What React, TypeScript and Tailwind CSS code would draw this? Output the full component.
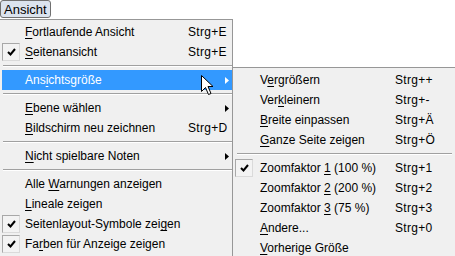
import React from "react";

type Item =
  | { sep: true }
  | {
      sep?: false;
      pre: string;
      key: string;
      post: string;
      shortcut?: string;
      checked?: boolean;
      arrow?: boolean;
      active?: boolean;
    };

const mainItems: Item[] = [
  { pre: "", key: "F", post: "ortlaufende Ansicht", shortcut: "Strg+E" },
  { pre: "", key: "S", post: "eitenansicht", shortcut: "Strg+E", checked: true },
  { sep: true },
  { pre: "Ans", key: "i", post: "chtsgröße", arrow: true, active: true },
  { sep: true },
  { pre: "", key: "E", post: "bene wählen", arrow: true },
  { pre: "", key: "B", post: "ildschirm neu zeichnen", shortcut: "Strg+D" },
  { sep: true },
  { pre: "", key: "N", post: "icht spielbare Noten", arrow: true },
  { sep: true },
  { pre: "Alle ", key: "W", post: "arnungen anzeigen" },
  { pre: "", key: "L", post: "ineale zeigen" },
  { pre: "Seitenlayout-Symbole zei", key: "g", post: "en", checked: true },
  { pre: "Fa", key: "r", post: "ben für Anzeige zeigen", checked: true },
];

const subItems: Item[] = [
  { pre: "V", key: "e", post: "rgrößern", shortcut: "Strg++" },
  { pre: "Ver", key: "k", post: "leinern", shortcut: "Strg+-" },
  { pre: "", key: "B", post: "reite einpassen", shortcut: "Strg+Ä" },
  { pre: "", key: "G", post: "anze Seite zeigen", shortcut: "Strg+Ö" },
  { sep: true },
  { pre: "Zoomfaktor ", key: "1", post: " (100 %)", shortcut: "Strg+1", checked: true },
  { pre: "Zoomfaktor ", key: "2", post: " (200 %)", shortcut: "Strg+2" },
  { pre: "Zoomfaktor ", key: "3", post: " (75 %)", shortcut: "Strg+3" },
  { pre: "", key: "A", post: "ndere...", shortcut: "Strg+0" },
  { pre: "", key: "V", post: "orherige Größe" },
];

const CheckBox = () => (
  <div className="w-[18px] h-[18px] border border-t-[#a8a8a8] border-l-[#a8a8a8] border-b-[#dadada] border-r-[#dadada] bg-[#f3f3f3] flex items-center justify-center">
    <svg width="9" height="8" viewBox="0 0 9 8">
      <path d="M1 4 L3.5 6.5 L8 1" stroke="#000" strokeWidth="2" fill="none" />
    </svg>
  </div>
);

const Arrow = ({ white }: { white?: boolean }) => (
  <svg width="4" height="7" viewBox="0 0 4 7">
    <path d="M0 0 L4 3.5 L0 7 Z" fill={white ? "#fff" : "#000"} />
  </svg>
);

const Label = ({ pre, k, post }: { pre: string; k: string; post: string }) => (
  <span className="whitespace-nowrap">
    {pre}
    <span className="underline underline-offset-2">{k}</span>
    {post}
  </span>
);

const Separator = ({ inset }: { inset: string }) => (
  <div className={`h-2 flex flex-col justify-center ${inset}`}>
    <div className="h-px bg-[#a0a0a0]" />
    <div className="h-px bg-white" />
  </div>
);

const MainMenu = () => (
  <div className="w-[233px] bg-[#f0f0f0] border-t border-r border-[#979797] pt-[2px] pb-1">
    {mainItems.map((it, i) =>
      it.sep ? (
        <Separator key={i} inset="ml-[3px]" />
      ) : (
        <div
          key={i}
          className={`h-5 grid grid-cols-[23px_163px_37px_9px] items-center ml-[2px] ${
            it.active ? "bg-[#3399ff] text-white" : ""
          }`}
        >
          <div className="flex items-center">{it.checked && <CheckBox />}</div>
          <Label pre={it.pre} k={it.key} post={it.post} />
          <span className="tracking-[0.3px]">{it.shortcut}</span>
          <span className="flex items-center">{it.arrow && <Arrow white={it.active} />}</span>
        </div>
      )
    )}
  </div>
);

const SubMenu = () => (
  <div className="absolute left-[232px] top-[48px] w-[240px] bg-[#f0f0f0] border-t border-l border-[#979797] pt-[2px]">
    {subItems.map((it, i) =>
      it.sep ? (
        <Separator key={i} inset="ml-[4px] mr-[20px]" />
      ) : (
        <div key={i} className="h-5 grid grid-cols-[27px_135px_1fr] items-center">
          <div className="flex items-center pl-[2px]">{it.checked && <CheckBox />}</div>
          <Label pre={it.pre} k={it.key} post={it.post} />
          <span className="tracking-[0.3px]">{it.shortcut}</span>
        </div>
      )
    )}
  </div>
);

const Cursor = () => (
  <svg
    className="absolute left-[201px] top-[56px]"
    width="13"
    height="21"
    viewBox="0 0 13 21"
  >
    <path
      d="M0.5 0.5 L0.5 16.5 L4.5 12.5 L7.5 19.5 L10 18.5 L7 11.5 L12 11.5 Z"
      fill="#fff"
      stroke="#000"
      strokeWidth="1"
      strokeLinejoin="round"
    />
  </svg>
);

const App = () => {
  return (
    <div className="w-[455px] h-[256px] overflow-hidden bg-white text-black text-[12px] leading-none font-['Liberation_Sans',Arial,sans-serif]">
      <div className="h-[19px] flex items-start">
        <div className="w-[51px] h-[18px] pl-[3px] flex items-center bg-[#dbe3ee] border border-[#707070] rounded-[3px] text-[13px]">
          Ansicht
        </div>
      </div>
      <div className="relative">
        <MainMenu />
        <SubMenu />
        <Cursor />
      </div>
    </div>
  );
};

export default App;
